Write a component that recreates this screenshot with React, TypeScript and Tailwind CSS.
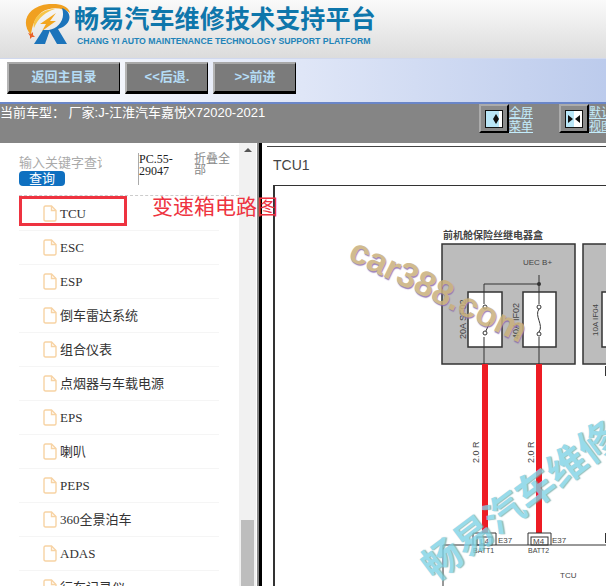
import React from "react";

const items = ["ESC", "ESP", "倒车雷达系统", "组合仪表", "点烟器与车载电源", "EPS", "喇叭", "PEPS", "360全景泊车", "ADAS", "行车记录仪"];

const FileIcon = () => (
  <svg width="14" height="17" viewBox="0 0 14 17" fill="none" stroke="#f7d3a4" strokeWidth="1.4" className="shrink-0">
    <path d="M1 2.5 Q1 1 2.5 1 H8.5 L13 5.5 V14.5 Q13 16 11.5 16 H2.5 Q1 16 1 14.5 Z" />
    <path d="M8.5 1 V5.5 H13" />
  </svg>
);

const NavButton = ({ label, width }: { label: string; width: string }) => (
  <button className={`${width} h-[32px] pb-[1px] bg-[#7b7b7b] border-t-[2px] border-l-[2px] border-t-[#a8a8a8] border-l-[#b4b4b4] border-b-[3px] border-r-[1px] border-b-black border-r-black text-[#b5dcf5] text-[13px] font-bold flex items-center justify-center`}>
    {label}
  </button>
);

const ToggleButton = ({ both }: { both?: boolean }) => (
  <div className="w-[30px] h-[29px] shrink-0 bg-[#8a8a8a] border-t-2 border-l-2 border-t-[#ababab] border-l-[#ababab] border-b-2 border-r-2 border-b-black border-r-black flex items-center justify-center">
    <svg width="18" height="18" viewBox="0 0 18 18">
      <rect x="0.5" y="0.5" width="17" height="17" fill="#b9e6f7" stroke="#111" />
      {both ? (
        <>
          <rect x="9" y="1" width="8" height="16" fill="#fff" />
          <path d="M3 5 L8 9 L3 13 Z M15 5 L10 9 L15 13 Z" fill="#111" />
        </>
      ) : (
        <>
          <rect x="14" y="1" width="3" height="16" fill="#fff" />
          <path d="M11 4 L14 9 L11 14 L8 9 Z" fill="#111" />
        </>
      )}
    </svg>
  </div>
);

const Row = ({ label }: { label: string }) => (
  <div className="h-[34px] border-b-[1px] border-[#f5f5f5] flex items-center pl-[24px] gap-[3px] text-[#333] text-[13px] whitespace-nowrap [font-family:'Liberation_Serif','Noto_Sans_CJK_SC',serif]">
    <FileIcon />
    <span>{label}</span>
  </div>
);

// viewBox uses the page's own coordinates, the pane starts at 275,186
const Diagram = () => (
  <svg width="331" height="400" viewBox="275 186 331 400" className="block" fontFamily="Liberation Sans, Noto Sans CJK SC, sans-serif">
    <g stroke="#333" strokeWidth="1.5">
      <rect x="442" y="244" width="133" height="120" fill="#bcbcbc" />
      <rect x="583" y="244" width="40" height="120" fill="#bcbcbc" />
      <rect x="468" y="292" width="34" height="55" fill="#fff" />
      <rect x="523" y="292" width="33" height="55" fill="#fff" />
      <rect x="602" y="292" width="30" height="55" fill="#fff" />
    </g>
    <path d="M539 275 V364 M484 364 V284 H539" fill="none" stroke="#333" strokeWidth="1" />
    <rect x="534" y="304" width="10" height="33" fill="#fff" />
    <path d="M539 309 C534 316 544 325 539 332" fill="none" stroke="#333" strokeWidth="1" />
    <rect x="480" y="304" width="10" height="33" fill="#fff" />
    <path d="M485 333 L490 322" fill="none" stroke="#333" strokeWidth="1" />
    <g fill="#fff" stroke="#333" strokeWidth="1">
      <circle cx="539" cy="307" r="2" />
      <circle cx="539" cy="334" r="2" />
      <circle cx="485" cy="307" r="2" />
      <circle cx="485" cy="333" r="2" />
    </g>
    <circle cx="539" cy="284" r="2" fill="#333" />
    <rect x="482" y="364" width="6" height="169" fill="#ed1c24" />
    <rect x="536" y="364" width="6" height="169" fill="#ed1c24" />
    <rect x="605" y="366" width="1" height="10" fill="#333" />
    <rect x="605" y="533" width="1" height="10" fill="#333" />
    <text x="443" y="239" fontSize="10" fontWeight="bold" fill="#444">前机舱保险丝继电器盒</text>
    <text x="523" y="265" fontSize="8" fill="#444">UEC B+</text>
    <text transform="translate(466 339) rotate(-90)" fontSize="9" fill="#444">20A SF02</text>
    <text transform="translate(519 339) rotate(-90)" fontSize="9" fill="#444">40A IF02</text>
    <text transform="translate(598 336) rotate(-90)" fontSize="8" fill="#444">10A IF04</text>
    <text transform="translate(479 463) rotate(-90)" fontSize="9" fill="#444">2.0 R</text>
    <text transform="translate(534 463) rotate(-90)" fontSize="9" fill="#444">2.0 R</text>
    <path d="M473 545 V533 H496 V545 M528 545 V533 H551 V545" fill="none" stroke="#333" strokeWidth="1" />
    <g fill="#fff" stroke="#333" strokeWidth="1">
      <rect x="477" y="537" width="15" height="8" />
      <rect x="531" y="537" width="17" height="8" />
    </g>
    <text x="480" y="544" fontSize="8" fill="#444">L4</text>
    <text x="533" y="544" fontSize="8" fill="#444">M4</text>
    <text x="498" y="543" fontSize="8" fill="#444">E37</text>
    <text x="552" y="543" fontSize="8" fill="#444">E37</text>
    <path d="M443 545 H606 M443 545 V586" stroke="#333" strokeWidth="1" fill="none" />
    <text x="473" y="553" fontSize="7" fill="#444">BATT1</text>
    <text x="528" y="553" fontSize="7" fill="#444">BATT2</text>
    <text x="560" y="578" fontSize="8" fill="#444">TCU</text>
  </svg>
);

export default function App() {
  return (
    <div className="w-[606px] h-[586px] overflow-hidden relative bg-white [font-family:'Liberation_Sans','Noto_Sans_CJK_SC',sans-serif]">
      {/* logo header */}
      <div className="h-[58px] bg-gradient-to-b from-[#fafafa] to-[#dcdcdc] flex items-start pl-[24px] pt-[4px] gap-[3px]">
        <svg width="47" height="41" viewBox="24 4 47 41" className="shrink-0">
          <path d="M31 35 C20 23 27 6 49 4 C61 3 69 7 70 13 C62 7 50 7 42 12 C35 17 32 26 31 35 Z" fill="#f0a020" />
          <path d="M34 28 C32 18 42 9 55 9 C47 11 38 18 34 28 Z" fill="#f7c548" />
          <path d="M40 24 L56 13 L50 21 L56 21 L42 31 L46 24 Z" fill="#f2a61f" />
          <path d="M28 33 L31 34 L33 32 L33 35 L35 37 L32 37 L30 39 L30 36 Z" fill="#e9622b" />
          <path d="M34 44 L43 30 L50 30 L45 44 Z" fill="#1c74bb" />
          <path d="M62 8 C73 12 72 25 58 29 L67 44 L57 44 L49 30 C58 28 66 20 62 8 Z" fill="#1c74bb" />
        </svg>
        <div className="flex flex-col">
          <span className="text-[#0e76ab] text-[25px] leading-[30px] font-bold tracking-[0.15px] whitespace-nowrap">畅易汽车维修技术支持平台</span>
          <span className="text-[#2283b8] text-[8.7px] leading-[12px] font-bold mt-[1px] ml-[3px] whitespace-nowrap">CHANG YI AUTO MAINTENANCE TECHNOLOGY SUPPORT PLATFORM</span>
        </div>
      </div>
      {/* toolbar */}
      <div className="h-[46px] bg-gradient-to-r from-white via-[#dfe6f7] to-[#bccbec] border-t-[1px] border-[#d0d8ee] border-b-[2px] border-b-[#6a86c8] flex items-start pt-[3px] pl-[7px] gap-[5px]">
        <NavButton label="返回主目录" width="w-[113px]" />
        <NavButton label="<<后退." width="w-[83px]" />
        <NavButton label=">>前进" width="w-[83px]" />
      </div>
      {/* current model */}
      <div className="h-[39px] bg-[#858585] flex items-start overflow-hidden">
        <span className="text-white text-[13px] leading-[15px] mt-[1px] w-[479px] shrink-0 whitespace-nowrap">当前车型： 厂家:J-江淮汽车嘉悦X72020-2021</span>
        <div className="flex shrink-0">
          <div className="flex w-[80px] shrink-0">
            <ToggleButton />
            <span className="text-[#c3ecfb] text-[12px] leading-[14px] underline w-[24px] mt-[2px]">全屏菜单</span>
          </div>
          <div className="flex w-[60px] shrink-0">
            <ToggleButton both />
            <span className="text-[#c3ecfb] text-[12px] leading-[14px] underline w-[24px] mt-[2px] shrink-0">默认视图</span>
          </div>
        </div>
      </div>
      {/* main */}
      <div className="flex h-[443px]">
        {/* sidebar */}
        <div className="w-[257px] shrink-0 flex overflow-hidden">
          <div className="w-[239px] pl-[19px] pr-[20px] shrink-0">
            <div className="h-[53px] mb-[1px] flex pt-[10px] border-b-[1px] border-dashed border-[#ccc] mr-[-20px]">
              <div className="w-[119px] shrink-0">
                <div className="w-[83px] overflow-hidden whitespace-nowrap text-[#aaa] text-[13px] leading-[16px] mt-[2px]">输入关键字查询</div>
                <div className="w-[46px] h-[15px] bg-[#0f70c0] rounded-[4px] text-white text-[13px] leading-[15px] text-center">查询</div>
              </div>
              <div className="w-[56px] h-[32px] shrink-0 border-l-[1px] border-[#aaa] text-[#222] text-[12px] leading-[12px] [font-family:'Liberation_Serif',serif]">PC.55-<br />29047</div>
              <div className="w-[38px] text-[#888] text-[12px] leading-[11px] pt-[1px]">折叠全部</div>
            </div>
            <Row label="TCU" />
            {items.map((label) => (
              <Row key={label} label={label} />
            ))}
          </div>
          {/* scrollbar */}
          <div className="w-[17px] bg-[#f1f1f1] relative shrink-0">
            <div className="flex justify-center pt-[5px]">
              <div className="w-0 h-0 border-l-[4px] border-r-[4px] border-b-[4px] border-l-transparent border-r-transparent border-b-[#555]" />
            </div>
            <div className="absolute left-[2px] top-[377px] w-[13px] h-[66px] bg-[#bdbdbd]" />
          </div>
        </div>
        <div className="w-[2px] bg-[#888] shrink-0" />
        <div className="w-[3px] bg-black shrink-0" />
        {/* diagram pane */}
        <div className="flex-1 bg-white pt-[3px] min-w-0">
          <div className="border-t-[1px] border-[#444] ml-[5px] h-[39px] pl-[6px] pt-[8px] text-[#444] text-[14px] leading-[20px]">TCU1</div>
          <div className="border-l-[2px] border-t-[1px] border-[#333] h-[401px] overflow-hidden ml-[11px]">
            <Diagram />
          </div>
        </div>
      </div>

      {/* red annotations pasted over the screenshot */}
      <div className="absolute left-[19px] top-[196px] w-[108px] h-[30px] border-[3px] border-[#ee3340]" />
      <div className="absolute left-[152px] top-[194px] text-[#ee3340] text-[21px] leading-[26px] whitespace-nowrap">变速箱电路图</div>

      {/* watermarks */}
      <div className="absolute left-[352px] top-[230px] rotate-[26deg] origin-left text-[35px] leading-[36px] font-bold text-[#c9b07c] opacity-85 whitespace-nowrap [text-shadow:1px_1px_1px_#8a6ab0]">car388.com</div>
      <div className="absolute left-[427px] top-[550px] -rotate-[37deg] origin-left text-[39px] leading-[44px] font-bold text-[#7fd3e6] opacity-80 whitespace-nowrap [text-shadow:1px_1px_1px_#7aa]">畅易汽车维修</div>
    </div>
  );
}
